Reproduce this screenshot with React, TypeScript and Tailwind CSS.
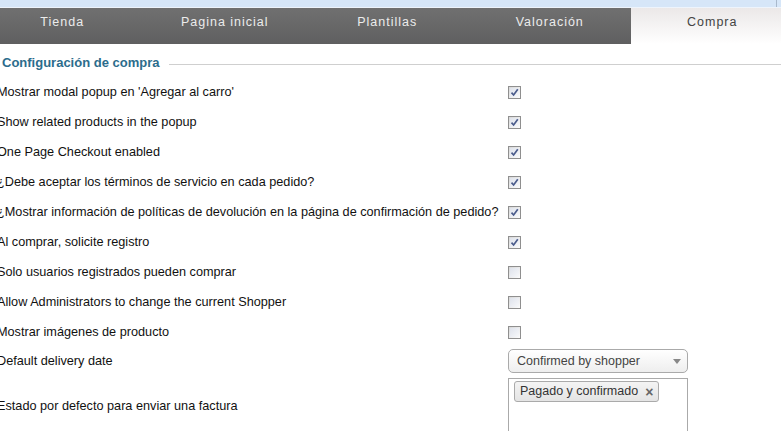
const tabs = ["Tienda", "Pagina inicial", "Plantillas", "Valoración", "Compra"];

const rows: { label: string; checked: boolean }[] = [
  { label: "Mostrar modal popup en 'Agregar al carro'", checked: true },
  { label: "Show related products in the popup", checked: true },
  { label: "One Page Checkout enabled", checked: true },
  { label: "¿Debe aceptar los términos de servicio en cada pedido?", checked: true },
  {
    label:
      "¿Mostrar información de políticas de devolución en la página de confirmación de pedido?",
    checked: true,
  },
  { label: "Al comprar, solicite registro", checked: true },
  { label: "Solo usuarios registrados pueden comprar", checked: false },
  { label: "Allow Administrators to change the current Shopper", checked: false },
  { label: "Mostrar imágenes de producto", checked: false },
];

function Checkbox({ checked }: { checked: boolean }) {
  return (
    <div className="w-[13px] h-[13px] border border-[#8f8f8f] bg-gradient-to-br from-[#d8d8d8] to-[#fdfdfd] p-[1px]">
      <div className="w-full h-full bg-gradient-to-br from-[#dfe3ec] to-[#f7f8fa] relative">
        {checked && (
          <svg viewBox="0 0 9 9" className="absolute inset-0 w-[9px] h-[9px]">
            <path d="M1.5 4.6 L3.6 7 L7.8 1.2" fill="none" stroke="#4b5c8c" strokeWidth="1.7" />
          </svg>
        )}
      </div>
    </div>
  );
}

export default function App() {
  return (
    <div className="w-[781px] h-[431px] overflow-hidden bg-white font-['Liberation_Sans',Arial,sans-serif] text-[12.7px] text-[#111]">
      {/* top strip */}
      <div className="h-[8px] bg-[#d6e6f8] border-b border-[#eef4fc] flex justify-end">
        <div className="w-px h-full bg-[#a9b9cc] mr-[4px]" />
      </div>

      {/* tabs */}
      <div className="h-[36px] flex bg-gradient-to-b from-[#707070] to-[#5f5f60] ml-[-19px]">
        {tabs.map((t, i) => (
          <div
            key={t}
            className={
              i === tabs.length - 1
                ? "w-[162.5px] shrink-0 pt-[5px] text-center tracking-[1px] text-[12.5px] text-[#444] bg-gradient-to-b from-[#ebe8e8] to-[#ffffff]"
                : "w-[162.5px] shrink-0 pt-[5px] text-center tracking-[1px] text-[12.5px] text-[#ececec]"
            }
          >
            {t}
          </div>
        ))}
      </div>

      {/* legend */}
      <div className="mt-[10px] h-[18px] flex items-center pl-[2px]">
        <span className="font-bold text-[13px] text-[#2c6c8c] pr-[10px]">Configuración de compra</span>
        <div className="flex-1 h-px bg-[#cfcfcf] mt-[2px]" />
      </div>

      <div className="pt-[5px] ml-[-3px]">
        {rows.map((r) => (
          <div key={r.label} className="h-[30px] flex items-center">
            <div className="w-[511px] shrink-0 whitespace-nowrap pt-[2px]">{r.label}</div>
            <Checkbox checked={r.checked} />
          </div>
        ))}

        <div className="h-[28px] flex items-center">
          <div className="w-[511px] shrink-0 pt-[2px]">Default delivery date</div>
          <div className="w-[180px] h-[24px] rounded-[5px] border border-[#aaa] bg-gradient-to-b from-[#ffffff] to-[#eeeeee] flex items-center pl-[8px] pr-[6px] text-[12.5px] text-[#444]">
            <span className="flex-1">Confirmed by shopper</span>
            <svg viewBox="0 0 8 5" className="w-[8px] h-[5px]">
              <path d="M0 0 L8 0 L4 5 Z" fill="#888" />
            </svg>
          </div>
        </div>

        <div className="h-[62px] flex items-center">
          <div className="w-[511px] shrink-0 pt-[2px]">Estado por defecto para enviar una factura</div>
          <div className="w-[180px] h-[58px] mt-[3px] self-start border border-[#aaa] bg-white p-[2px] pl-[5px]">
            <div className="inline-flex items-center h-[21px] border border-[#aaa] rounded-[3px] bg-gradient-to-b from-[#f4f4f4] to-[#e4e4e4] pl-[5px] pr-[5px] text-[12.5px] text-[#333]">
              Pagado y confirmado
              <span className="ml-[7px] font-bold text-[14px] text-[#666] leading-none">×</span>
            </div>
          </div>
        </div>
      </div>
    </div>
  );
}
